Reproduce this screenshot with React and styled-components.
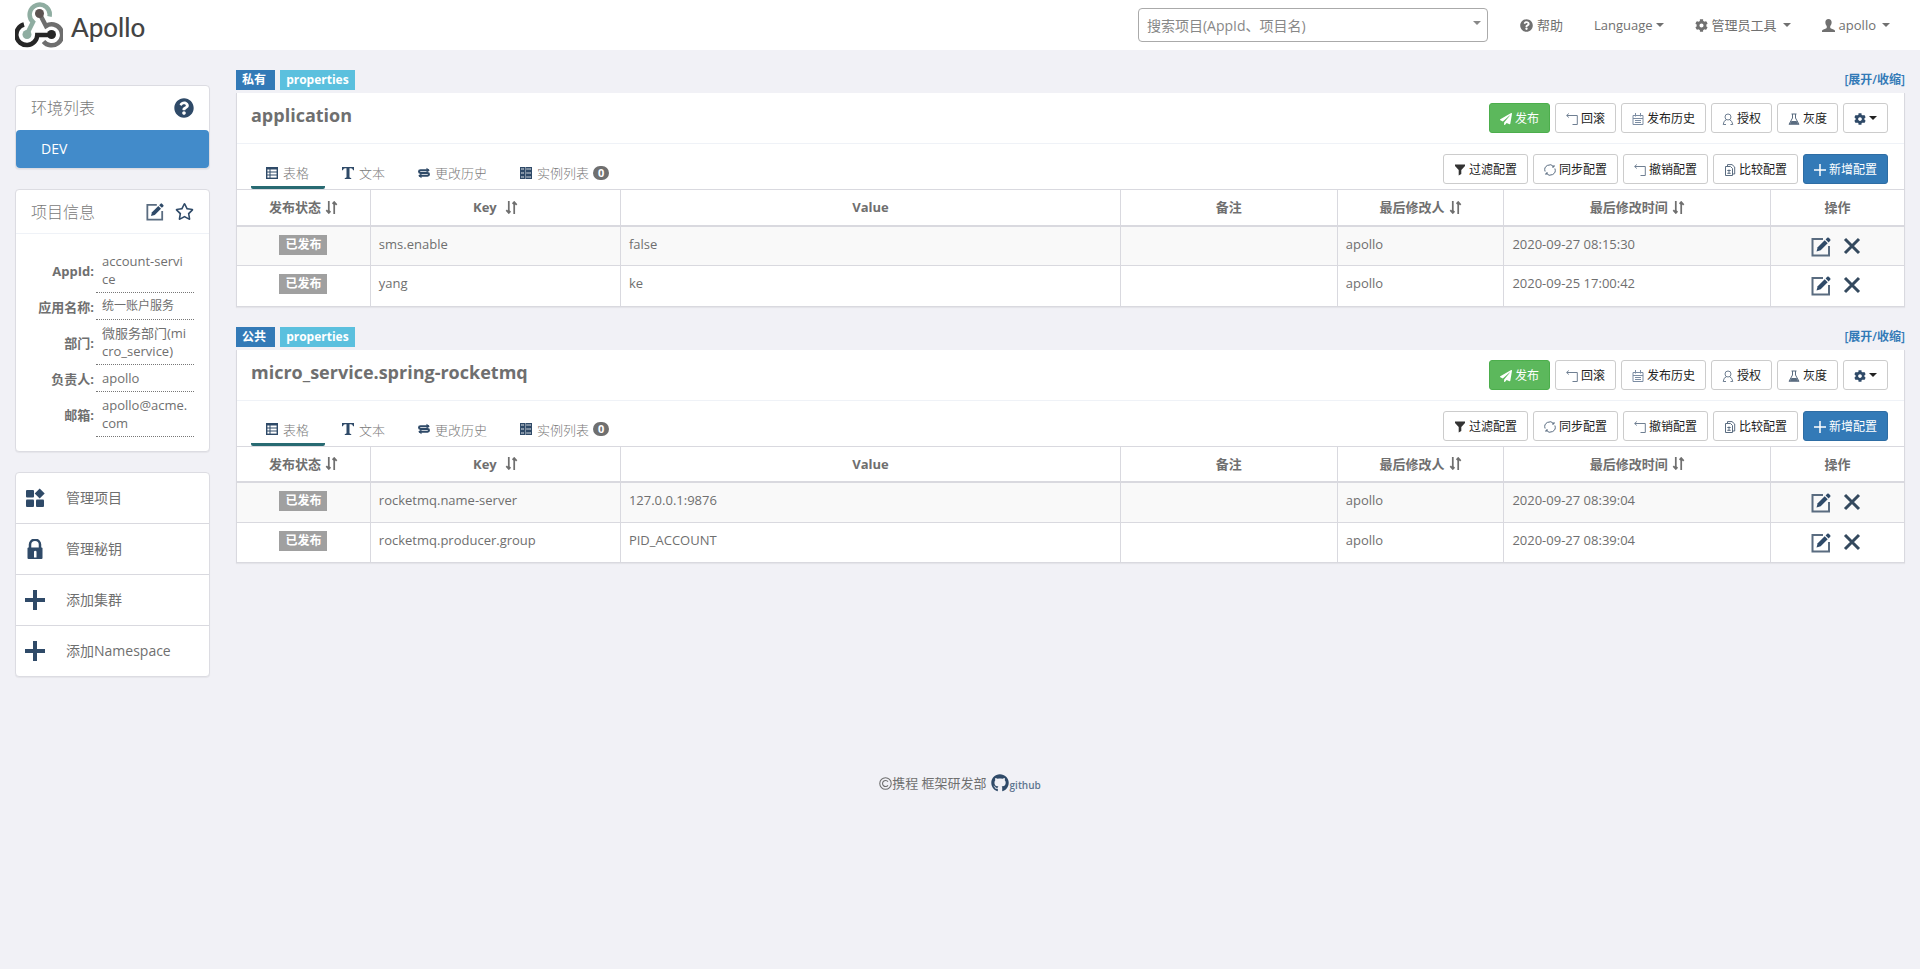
import React from "react";
import styled, { createGlobalStyle, css } from "styled-components";
import { FaGithub, FaQuestionCircle, FaCog, FaPaperPlane, FaRegStar } from "react-icons/fa";

const NAVY = "#2f4a68";

const GlobalStyle = createGlobalStyle`
  *, *::before, *::after { box-sizing: border-box; }
  body {
    margin: 0;
    background: #f1f1f6;
    color: #6f6f6f;
    font-family: "Open Sans", "Noto Sans CJK SC", sans-serif;
    font-size: 13px;
    line-height: 18px;
  }
  h1, h2, ul, dl, dd { margin: 0; padding: 0; }
  ul { list-style: none; }
  button, select { font-family: inherit; }
  svg { display: block; flex: none; }
`;

/* ---------- icons ---------- */

const LogoMark = () => (
  <svg width="48" height="46" viewBox="0 0 48 46" fill="none" strokeWidth="4.500" aria-hidden="true">
    <path d="M34.5 14.5 A10 10 0 1 0 18 20 L12 32" stroke="#8fada1" />
    <path d="M24.5 11.5 L31 24 A10.5 10.5 0 1 1 28.5 39.5" stroke="#6e6e6e" />
    <path d="M37 33 H22.3 A10.5 10.5 0 1 1 9 22.5" stroke="#262626" />
    <circle cx="24.5" cy="11.5" r="4.5" fill="#5d5352" />
    <circle cx="12" cy="32.5" r="4.5" fill="#8fada1" />
    <circle cx="36.5" cy="32.5" r="4.5" fill="#262626" />
  </svg>
);

const Glyph = ({ size = 12, children, ...rest }) => (
  <svg width={size} height={size} viewBox="0 0 12 12" fill="none" stroke="currentColor" aria-hidden="true" {...rest}>
    {children}
  </svg>
);

const UserIcon = () => (
  <Glyph size={13} fill="currentColor" stroke="none">
    <path d="M6 0c1.9 0 2.9 1.2 2.9 3.1 0 1.700-.6 2.700-1.300 3.500v1.200c0 .6.5.8 1.300 1.100 1.700.6 3.100 1.100 3.100 2.100v1H0v-1c0-1 1.400-1.500 3.100-2.100.8-.3 1.300-.5 1.300-1.100V6.600C3.700 5.800 3.100 4.800 3.100 3.100 3.100 1.200 4.100 0 6 0z" />
  </Glyph>
);
const EditIcon = ({ size = 18 }) => (
  <svg width={size} height={size} viewBox="0 0 20 20" fill="none" aria-hidden="true">
    <path d="M12 2H1.500V18.500H18V9" stroke="#5a6c80" strokeWidth="2" />
    <path d="M5.500 14.500l1.200-4.200 7-7 3 3-7 7z" fill={NAVY} />
    <path d="M14.600 2.400l1.600-1.600q.8-.8 1.600 0l1.400 1.400q.8.8 0 1.600l-1.600 1.600z" fill={NAVY} />
  </svg>
);
const CloseIcon = () => (
  <svg width="18" height="18" viewBox="0 0 18 18" fill="none" stroke="#34495e" strokeWidth="3" aria-hidden="true">
    <path d="M2 2l14 14M16 2L2 16" />
  </svg>
);
const BlocksIcon = () => (
  <svg width="20" height="20" viewBox="0 0 20 20" fill={NAVY} aria-hidden="true">
    <rect x="1" y="2" width="8" height="7.500" rx="1" />
    <rect x="1" y="11.500" width="8" height="7.500" rx="1" />
    <rect x="11" y="11.500" width="8" height="7.500" rx="1" />
    <path d="M14.700 .5l5 5-5 5-5-5z" />
  </svg>
);
const PlusIcon = () => (
  <svg width="20" height="20" viewBox="0 0 20 20" fill={NAVY} aria-hidden="true">
    <path d="M8 0h4v8h8v4h-8v8H8v-8H0V8h8z" />
  </svg>
);
const LockIcon = () => (
  <svg width="20" height="20" viewBox="0 0 20 20" aria-hidden="true">
    <path d="M5 9V5.500a5 4.800 0 0 1 10 0V9" fill="none" stroke={NAVY} strokeWidth="2.500" />
    <rect x="2.500" y="8.500" width="15" height="11.500" rx="1" fill={NAVY} />
    <path d="M9 12.500a1.500 1.500 0 0 1 2.500 0v6H9z" fill="#fff" />
  </svg>
);
const SortIcon = () => (
  <Glyph size={13} strokeWidth="1.600">
    <path d="M3.500 0V11M1.200 8.500L3.500 11L5 9.300M8.500 12V1M7 2.700L8.500 1L10.800 3.500" />
  </Glyph>
);
const TableIcon = () => (
  <Glyph>
    <rect x="0.700" y="0.700" width="10.600" height="10.600" strokeWidth="1.400" />
    <path d="M1 1.500h10" strokeWidth="2" />
    <path d="M1 5h10M1 8h10M4 1v10" />
  </Glyph>
);
const TextIcon = () => (
  <Glyph fill="currentColor" stroke="none">
    <path d="M0 0h12v3.200h-.9Q10.600 1.300 9 1.300H7.500V10q0 1 1.700 1v1H2.800v-1q1.700 0 1.700-1V1.300H3Q1.400 1.300.9 3.200H0z" />
  </Glyph>
);
const HistoryIcon = () => (
  <Glyph strokeWidth="2">
    <path d="M11 3.200H2.500Q1 3.200 1 4.500T2.500 6H9.500Q11 6 11 7.300T9.500 8.800H1" />
    <path d="M8.500 .8L11.800 3.200L8.500 5.600zM3.500 6.400L.2 8.800L3.500 11.200z" fill="currentColor" stroke="none" />
  </Glyph>
);
const InstanceIcon = () => (
  <Glyph strokeWidth="1.200">
    <path d="M.6.6h3.800v2.800H.6zM.6 4.600h3.800v2.800H.6zM.6 8.600h3.800v2.800H.6zM6 .6h5.400v2.800H6zM6 4.600h5.400v2.800H6zM6 8.600h5.400v2.800H6z" />
    <path d="M1.500 2h2M7 2h3.500M1.500 6h2M7 6h3.500M1.500 10h2M7 10h3.500" />
  </Glyph>
);
const BackIcon = () => (
  <Glyph stroke="#6f7f92">
    <path d="M2.800 .5L.7 2.500L2.800 4.500M.7 2.500H11.300V11.500H6.500" />
  </Glyph>
);
const CalendarIcon = () => (
  <Glyph stroke="#7c8da3">
    <path d="M1 2.500h10v9H1zM3.500 0v3.500M8.500 0v3.500M1 5.500h10M3 7.500h6M3 9.500h6" />
  </Glyph>
);
const PersonIcon = () => (
  <Glyph stroke="#6f7f92">
    <circle cx="6" cy="4" r="3" />
    <path d="M4.500 6.700Q1.500 7.500 1.200 11.500H4M7.500 6.700Q10.300 7.800 10.800 11.500H8.500" />
  </Glyph>
);
const FlaskIcon = () => (
  <Glyph stroke="#5a6c80">
    <path d="M3.500 1h5M4.500 1v4L1 11.300h10L7.500 5V1" />
    <path d="M3.500 8.500h5l1.200 2H2.300z" fill="#5a6c80" />
  </Glyph>
);
const FunnelIcon = () => (
  <Glyph fill="#333" stroke="none">
    <path d="M1 .5h10v1.500L7.300 6V10L4.700 11.500V6L1 2z" />
  </Glyph>
);
const SyncIcon = () => (
  <Glyph stroke="#5a6c80">
    <path d="M1.100 7.500A5 5 0 0 1 9.800 2.800M10.900 4.500A5 5 0 0 1 2.200 9.200M10 1v2H8M2 11V9H4" />
  </Glyph>
);
const CompareIcon = () => (
  <Glyph stroke="#5a6c80">
    <path d="M1.500 2.500H6.500L8.500 4.500V11.500H1.500zM3.500 2.500V.6H8L10.700 3V10H8.700M5 5.500v4M3.300 6.500h3.400M3.300 9.300h3.400" />
  </Glyph>
);
const AddIcon = () => (
  <Glyph stroke="#fff" strokeWidth="1.500"><path d="M6 0v12M0 6h12" /></Glyph>
);
const CopyrightIcon = () => (
  <Glyph size={13}>
    <circle cx="6" cy="6" r="5.300" />
    <path d="M8.300 4.300A2.800 2.800 0 1 0 8.300 7.700" />
  </Glyph>
);

const Caret = styled.span`
  flex: none;
  border: 4px solid transparent;
  border-top-color: currentColor;
  border-bottom: 0;
`;

/* ---------- top bar ---------- */

const Navbar = styled.header`
  display: flex;
  align-items: center;
  min-height: 50px;
  padding: 0 15px;
  background: #fff;
`;
const Brand = styled.a`
  display: flex;
  align-items: center;
  gap: 8px;
  margin-right: auto;
  color: #444;
  font-family: Lato, sans-serif;
  font-size: 26px;
  font-weight: 500;
  line-height: 32px;
  text-decoration: none;
`;
const BrandName = styled.span`
  padding-top: 4px;
`;
const SearchBox = styled.div`
  display: grid;
  align-items: center;
  justify-items: end;
  width: 350px;
  margin-right: 16px;
  > * { grid-area: 1 / 1; }
  ${Caret} { margin: 0 7px 5px 0; color: #888; pointer-events: none; z-index: 1; }
`;
const SearchSelect = styled.select`
  width: 100%;
  height: 34px;
  padding: 0 24px 0 8px;
  border: 1px solid #aaa;
  border-radius: 4px;
  appearance: none;
  background: #fff;
  color: #888;
  font-size: 14px;
`;
const NavLinks = styled.ul`
  display: flex;
`;
const NavLink = styled.a`
  display: flex;
  align-items: center;
  gap: ${(p) => (p.$tight ? "3px" : "4px")};
  padding: 0 15px 0 16px;
  color: #707070;
  line-height: 50px;
  text-decoration: none;
  ${Caret} { margin-left: ${(p) => (p.$tight ? 0 : "2px")}; }
`;

/* ---------- page frame ---------- */

const Page = styled.div`
  display: flex;
  align-items: flex-start;
  gap: 26px;
  padding: 20px 15px 0;
`;
const Sidebar = styled.aside`
  display: flex;
  flex: none;
  flex-direction: column;
  gap: 20px;
  width: 195px;
  padding-top: 15px;
`;
const Main = styled.main`
  display: flex;
  flex: 1;
  flex-direction: column;
  gap: 20px;
  min-width: 0;
`;

/* ---------- sidebar ---------- */

const Card = styled.section`
  border: 1px solid #dcdce2;
  border-radius: 4px;
  background: #fff;
  box-shadow: 0 1px 1px rgba(0, 0, 0, 0.05);
`;
const CardHead = styled.div`
  display: flex;
  align-items: center;
  gap: 11px;
  height: 44px;
  padding: 0 15px;
  color: ${NAVY};
  ${(p) => p.$ruled && "border-bottom: 1px solid #eff2f7;"}
`;
const CardTitle = styled.h2`
  flex: 1;
  color: #797979;
  font-size: 16px;
  font-weight: 300;
`;
const IconButton = styled.button`
  display: inline-flex;
  padding: 0;
  border: 0;
  background: none;
  color: ${NAVY};
`;
const EnvLink = styled.a`
  display: block;
  padding: 0 25px;
  border-radius: 4px;
  background: #428bca;
  color: #fff;
  font-size: 14px;
  line-height: 38px;
  text-decoration: none;
`;
const InfoTable = styled.table`
  width: 163px;
  margin: 14px 15px;
  border-spacing: 0;
  table-layout: fixed;
  th {
    width: 65px;
    padding: 0 2px 0 0;
    text-align: right;
    white-space: nowrap;
  }
  td {
    padding: 4px 6px;
    border-bottom: 1px dotted #777;
    word-break: break-all;
  }
`;
const SmallText = styled.span`
  display: block;
  font-size: 12px;
`;
const MenuItem = styled.li`
  & + & { border-top: 1px solid #d9d9df; }
`;
const MenuLink = styled.a`
  display: flex;
  align-items: center;
  gap: 21px;
  padding: 0 9px;
  color: #6f6f6f;
  font-size: 14px;
  line-height: 50px;
  text-decoration: none;
`;

/* ---------- namespaces ---------- */

const TagRow = styled.div`
  display: flex;
  align-items: center;
  gap: 5px;
  margin-bottom: 3px;
`;
const Tag = styled.span`
  display: inline-block;
  padding: 0 6px;
  background: ${(p) => p.$color};
  color: #fff;
  font-size: 12px;
  font-weight: 700;
  line-height: 20px;
`;
const ToggleLink = styled.a`
  margin-left: auto;
  color: #337ab7;
  font-size: 12px;
  font-weight: 600;
  text-decoration: none;
`;
const Panel = styled.div`
  border: solid #d9d9df;
  border-width: 0 1px 1px;
  background: #fff;
  box-shadow: 0 1px 1px rgba(0, 0, 0, 0.05);
`;
const PanelHead = styled.div`
  display: flex;
  justify-content: space-between;
  height: 51px;
  padding: 10px 16px 0 14px;
  border-bottom: 1px solid #eff2f7;
`;
const PanelTitle = styled.h2`
  font-size: 18px;
  font-weight: 700;
  line-height: 24px;
`;
const TabBar = styled.div`
  display: flex;
  justify-content: space-between;
  height: 45px;
  padding: 10px 16px 0 14px;
`;
const Tabs = styled.div`
  display: flex;
  align-self: flex-end;
  gap: 2px;
`;
const Tab = styled.button`
  display: flex;
  align-items: center;
  height: 30px;
  padding: 0 16px 0 15px;
  border: 0;
  border-bottom: 3px solid ${(p) => (p.$active ? "#286a72" : "transparent")};
  border-radius: 2px;
  background: none;
  color: #797979;
  font-size: 13px;
  font-weight: 300;
  svg { margin-right: 5px; color: ${NAVY}; }
`;
const Count = styled.span`
  min-width: 16px;
  margin-left: 4px;
  border-radius: 8px;
  background: #6f6f6f;
  color: #fff;
  font-size: 11px;
  font-weight: 700;
  line-height: 14px;
  text-align: center;
`;
const ButtonRow = styled.div`
  display: flex;
  gap: 5px;
`;
const tones = {
  plain: css`border-color: #ccc; background: #fff; color: #222;`,
  green: css`border-color: #4cae4c; background: #5cb85c; color: #fff;`,
  blue: css`border-color: #2e6da4; background: #337ab7; color: #fff;`,
};
const Button = styled.button`
  display: flex;
  align-items: center;
  justify-content: center;
  gap: 3px;
  height: 30px;
  padding: 0 10px;
  border: 1px solid;
  border-radius: 3px;
  font-size: 12px;
  white-space: nowrap;
  ${(p) => tones[p.$tone || "plain"]}
  svg { margin-top: 2px; }
`;

const DataTable = styled.table`
  width: 100%;
  border-collapse: collapse;
  table-layout: fixed;
  th, td {
    padding: 8px;
    border: 1px solid #d9d9df;
  }
  tr > :first-child { border-left: 0; }
  tr > :last-child { border-right: 0; }
  th {
    height: 36px;
    border-bottom-width: 2px;
    vertical-align: middle;
    font-weight: 700;
  }
  td { height: 40px; vertical-align: top; }
  tbody tr:nth-child(odd) { background: #f9f9f9; }
  tbody tr:last-child td { border-bottom: 0; }
`;
const HeadLabel = styled.span`
  display: flex;
  align-items: center;
  justify-content: center;
  gap: ${(p) => (p.$wide ? "8px" : "4px")};
`;
const CenterCell = styled.td`
  text-align: center;
`;
const Actions = styled.div`
  display: flex;
  justify-content: center;
  gap: 12px;
  padding: 2px 4px 0 0;
`;

const Footer = styled.footer`
  display: flex;
  align-items: center;
  justify-content: center;
  gap: 4px;
  padding: 97px 0 30px;
`;
const Owner = styled.span`
  display: flex;
  align-items: center;
`;
const GithubLink = styled.a`
  display: flex;
  align-items: flex-end;
  gap: 1px;
  color: #5d7590;
  font-size: 10px;
  font-weight: 600;
  line-height: 14px;
  text-decoration: none;
  svg { color: ${NAVY}; }
`;

/* ---------- data ---------- */

const columns = [
  { name: "发布状态", width: "8%", sort: true },
  { name: "Key", width: "15%", sort: true, wide: true },
  { name: "Value", width: "30%" },
  { name: "备注", width: "13%" },
  { name: "最后修改人", width: "10%", sort: true },
  { name: "最后修改时间", width: "16%", sort: true },
  { name: "操作", width: "8%" },
];

const namespaces = [
  {
    kind: "私有",
    name: "application",
    items: [
      ["sms.enable", "false", "2020-09-27 08:15:30"],
      ["yang", "ke", "2020-09-25 17:00:42"],
    ],
  },
  {
    kind: "公共",
    name: "micro_service.spring-rocketmq",
    items: [
      ["rocketmq.name-server", "127.0.0.1:9876", "2020-09-27 08:39:04"],
      ["rocketmq.producer.group", "PID_ACCOUNT", "2020-09-27 08:39:04"],
    ],
  },
];

const projectInfo = [
  ["AppId:", "account-service"],
  ["应用名称:", <SmallText key="n">统一账户服务</SmallText>],
  ["部门:", "微服务部门(micro_service)"],
  ["负责人:", "apollo"],
  ["邮箱:", "apollo@acme.com"],
];

const menu = [
  [BlocksIcon, "管理项目"],
  [LockIcon, "管理秘钥"],
  [PlusIcon, "添加集群"],
  [PlusIcon, "添加Namespace"],
];

function Namespace({ kind, name, items }) {
  return (
    <section>
      <TagRow>
        <Tag $color="#337ab7">{kind}&nbsp;</Tag>
        <Tag $color="#5bc0de">properties</Tag>
        <ToggleLink href="#">[展开/收缩]</ToggleLink>
      </TagRow>
      <Panel>
        <PanelHead>
          <PanelTitle>{name}</PanelTitle>
          <ButtonRow>
            <Button $tone="green"><FaPaperPlane size={12} />发布</Button>
            <Button><BackIcon />回滚</Button>
            <Button><CalendarIcon />发布历史</Button>
            <Button><PersonIcon />授权</Button>
            <Button><FlaskIcon />灰度</Button>
            <Button aria-label="更多"><FaCog size={12} color={NAVY} /><Caret /></Button>
          </ButtonRow>
        </PanelHead>
        <TabBar>
          <Tabs role="tablist">
            <Tab role="tab" aria-selected="true" $active><TableIcon />表格</Tab>
            <Tab role="tab"><TextIcon />文本</Tab>
            <Tab role="tab"><HistoryIcon />更改历史</Tab>
            <Tab role="tab"><InstanceIcon />实例列表<Count>0</Count></Tab>
          </Tabs>
          <ButtonRow>
            <Button><FunnelIcon />过滤配置</Button>
            <Button><SyncIcon />同步配置</Button>
            <Button><BackIcon />撤销配置</Button>
            <Button><CompareIcon />比较配置</Button>
            <Button $tone="blue"><AddIcon />新增配置</Button>
          </ButtonRow>
        </TabBar>
        <DataTable>
          <colgroup>
            {columns.map((c) => <col key={c.name} width={c.width} />)}
          </colgroup>
          <thead>
            <tr>
              {columns.map((c) => (
                <th key={c.name}>
                  <HeadLabel $wide={c.wide}>{c.name}{c.sort && <SortIcon />}</HeadLabel>
                </th>
              ))}
            </tr>
          </thead>
          <tbody>
            {items.map(([key, value, time]) => (
              <tr key={key}>
                <CenterCell><Tag $color="#a0a0a0">已发布</Tag></CenterCell>
                <td>{key}</td>
                <td>{value}</td>
                <td />
                <td>apollo</td>
                <td>{time}</td>
                <td>
                  <Actions>
                    <IconButton aria-label="修改"><EditIcon size={20} /></IconButton>
                    <IconButton aria-label="删除"><CloseIcon /></IconButton>
                  </Actions>
                </td>
              </tr>
            ))}
          </tbody>
        </DataTable>
      </Panel>
    </section>
  );
}

export default function App() {
  return (
    <>
      <GlobalStyle />
      <Navbar>
        <Brand href="#"><LogoMark /><BrandName>Apollo</BrandName></Brand>
        <SearchBox>
          <SearchSelect aria-label="搜索项目" defaultValue="">
            <option value="">搜索项目(AppId、项目名)</option>
          </SearchSelect>
          <Caret />
        </SearchBox>
        <nav>
          <NavLinks>
            <li><NavLink href="#"><FaQuestionCircle size={13} />帮助</NavLink></li>
            <li><NavLink href="#" $tight>Language<Caret /></NavLink></li>
            <li><NavLink href="#"><FaCog size={13} />管理员工具<Caret /></NavLink></li>
            <li><NavLink href="#"><UserIcon />apollo<Caret /></NavLink></li>
          </NavLinks>
        </nav>
      </Navbar>
      <Page>
        <Sidebar>
          <Card>
            <CardHead>
              <CardTitle>环境列表</CardTitle>
              <IconButton aria-label="帮助"><FaQuestionCircle size={20} /></IconButton>
            </CardHead>
            <EnvLink href="#">DEV</EnvLink>
          </Card>
          <Card>
            <CardHead $ruled>
              <CardTitle>项目信息</CardTitle>
              <IconButton aria-label="修改项目"><EditIcon /></IconButton>
              <IconButton aria-label="收藏"><FaRegStar size={19} /></IconButton>
            </CardHead>
            <InfoTable>
              <tbody>
                {projectInfo.map(([label, value]) => (
                  <tr key={label}><th scope="row">{label}</th><td>{value}</td></tr>
                ))}
              </tbody>
            </InfoTable>
          </Card>
          <Card as="nav">
            <ul>
              {menu.map(([Icon, text]) => (
                <MenuItem key={text}><MenuLink href="#"><Icon />{text}</MenuLink></MenuItem>
              ))}
            </ul>
          </Card>
        </Sidebar>
        <Main>
          {namespaces.map((n) => <Namespace key={n.name} {...n} />)}
        </Main>
      </Page>
      <Footer>
        <Owner><CopyrightIcon />携程 框架研发部</Owner>
        <GithubLink href="#"><FaGithub size={18} />github</GithubLink>
      </Footer>
    </>
  );
}
